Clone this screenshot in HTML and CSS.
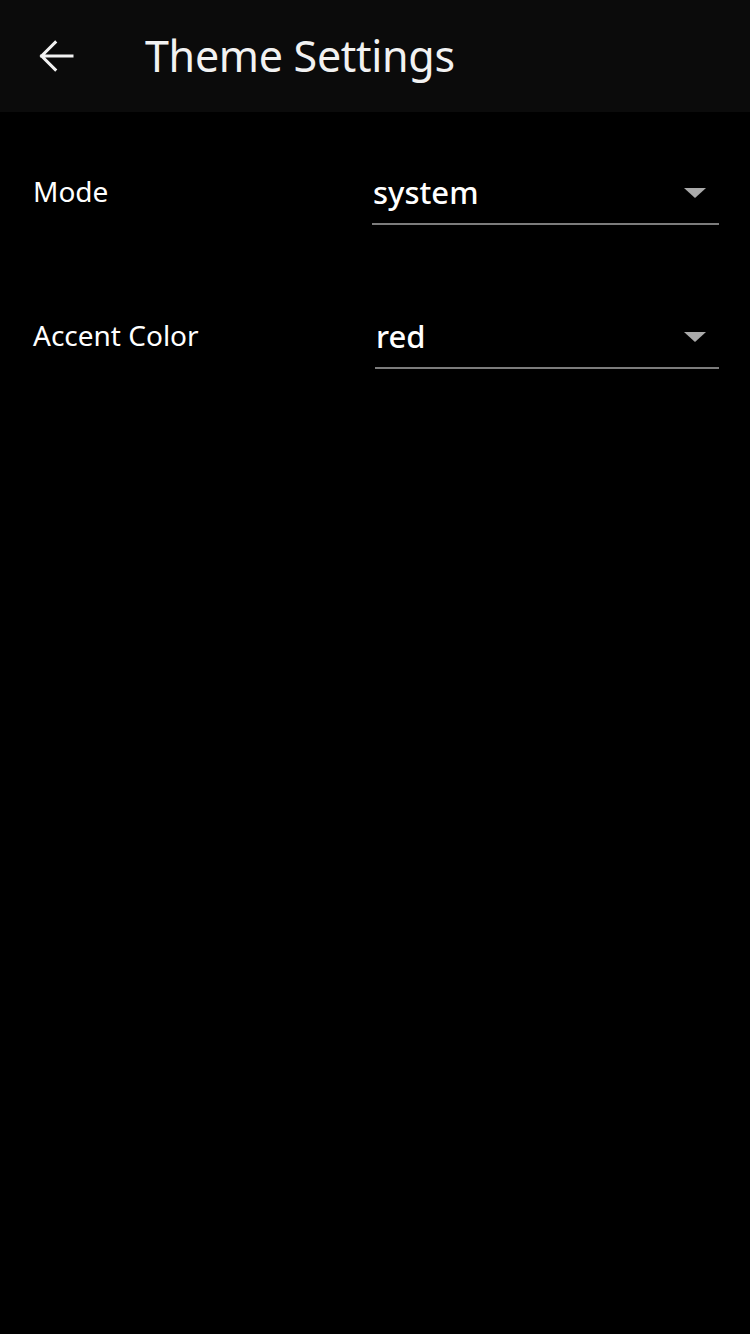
FILE: index.html
```html
<!DOCTYPE html>
<html>
<head>
<meta charset="utf-8">
<link rel="stylesheet" href="styles.css">
</head>
<body>
<header class="appbar">
  <button class="back" aria-label="Back">
    <svg width="48" height="48" viewBox="0 0 24 24"><path d="M20 12H4.8M11.6 5.2L4.8 12l6.8 6.8" fill="none" stroke="#f2f2f2" stroke-width="1.5" stroke-linecap="square"/></svg>
  </button>
  <h1 class="title">Theme Settings</h1>
</header>
<main class="content">
  <div class="row">
    <span class="label">Mode</span>
    <div class="dropdown dd-mode">
      <span class="value">system</span>
      <span class="caret"></span>
    </div>
  </div>
  <div class="row">
    <span class="label">Accent Color</span>
    <div class="dropdown dd-accent">
      <span class="value">red</span>
      <span class="caret"></span>
    </div>
  </div>
</main>
</body>
</html>
```

FILE: styles.css
```css
html, body {
  margin: 0;
  padding: 0;
  background: #000;
  color: #fff;
  font-family: "Noto Sans", "Open Sans", sans-serif;
}
.appbar {
  height: 112px;
  background: #0b0b0b;
  display: flex;
  align-items: center;
}
.back {
  width: 112px;
  height: 112px;
  background: none;
  border: 0;
  padding: 0;
  display: flex;
  align-items: center;
  justify-content: center;
}
.title {
  margin: 0 0 0 33px;
  font-size: 43px;
  font-weight: 400;
  color: #f2f2f2;
  letter-spacing: -0.3px;
  line-height: 1;
  padding-bottom: 2px;
}
.content {
  padding: 0 31px 0 33px;
}
.row {
  display: flex;
  align-items: center;
  margin-top: 86px;
}
.row:first-child {
  margin-top: 55px;
}
.label {
  flex: 1;
  font-size: 28px;
  line-height: 1;
  padding-bottom: 11px;
}
.dropdown {
  display: flex;
  align-items: center;
  border-bottom: 2px solid #7c7c7c;
  height: 58px;
  box-sizing: border-box;
  padding-bottom: 5px;
}
.dd-mode { width: 347px; }
.dd-accent { width: 344px; }
.value {
  flex: 1;
  font-size: 31px;
  font-weight: 500;
  padding-left: 1px;
  line-height: 1;
}
.caret {
  width: 0;
  height: 0;
  border-left: 11px solid transparent;
  border-right: 11px solid transparent;
  border-top: 10px solid #aaa;
  margin-right: 13px;
}
```
